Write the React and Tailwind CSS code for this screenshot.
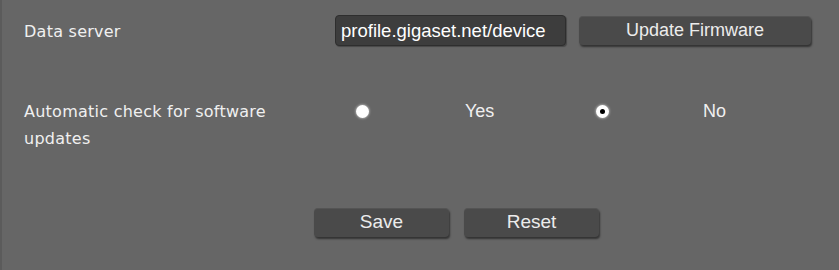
import React, { useState } from "react";

const labelFont = { fontFamily: "Tahoma, 'DejaVu Sans', Verdana, sans-serif" };

const Radio = ({ checked, onClick }) => (
  <button
    onClick={onClick}
    className="w-[13px] h-[13px] rounded-full bg-white shadow-[0_0_2px_1px_rgba(255,255,255,0.35)] flex items-center justify-center"
  >
    {checked && <span className="w-[5px] h-[5px] rounded-full bg-black" />}
  </button>
);

const GrayButton = ({ children, className = "" }) => (
  <button
    className={`h-[29px] rounded-[4px] bg-[#4a4a4a] text-[#ececec] font-['Liberation_Sans',Arial,sans-serif] shadow-[1px_2px_2px_rgba(0,0,0,0.5),inset_0_1px_0_rgba(255,255,255,0.06)] ${className}`}
  >
    {children}
  </button>
);

export default function App() {
  const [autoCheck, setAutoCheck] = useState("no");

  return (
    <div className="w-[839px] h-[270px] bg-[#666666] flex">
      <div className="w-[2px] bg-[#5b5b5b]" />
      <div className="flex-1 flex flex-col">
        {/* Data server row */}
        <div className="flex items-center pt-[15px] h-[46px]">
          <div className="w-[333px] pl-[22px] pt-[3px] text-[16px] tracking-[0.25px] text-[#f0f0f0]" style={labelFont}>
            Data server
          </div>
          <div className="w-[231px] h-[31px] rounded-[4px] bg-[#3d3d3d] border border-[#2e2e2e] shadow-[1px_1px_1px_rgba(0,0,0,0.3)] flex items-center pl-[5px] text-[18.5px] text-white font-['Liberation_Sans',Arial,sans-serif]">
            profile.gigaset.net/device
          </div>
          <GrayButton className="ml-[13px] w-[232px] text-[18px]">Update Firmware</GrayButton>
        </div>

        {/* Automatic check row */}
        <div className="flex mt-[52px]">
          <div className="w-[333px] pl-[22px] text-[16px] tracking-[0.25px] leading-[27px] text-[#f0f0f0]" style={labelFont}>
            Automatic check for software
            <br />
            updates
          </div>
          <div className="flex items-center h-[27px] text-[18px] text-[#f0f0f0] font-['Liberation_Sans',Arial,sans-serif]">
            <div className="w-[130px] pl-[21px] flex items-center">
              <Radio checked={autoCheck === "yes"} onClick={() => setAutoCheck("yes")} />
            </div>
            <div className="w-[131px]">Yes</div>
            <div className="w-[107px] flex items-center">
              <Radio checked={autoCheck === "no"} onClick={() => setAutoCheck("no")} />
            </div>
            <div>No</div>
          </div>
        </div>

        {/* Actions */}
        <div className="flex gap-[15px] mt-[56px] pl-[312px]">
          <GrayButton className="w-[135px] text-[19px]">Save</GrayButton>
          <GrayButton className="w-[135px] text-[19px]">Reset</GrayButton>
        </div>
      </div>
    </div>
  );
}
